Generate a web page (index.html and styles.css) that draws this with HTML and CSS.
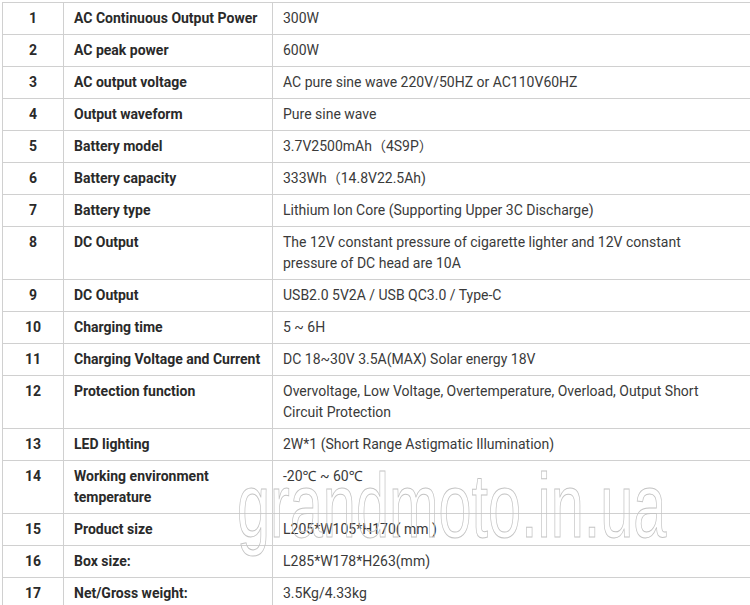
FILE: index.html
```html
<!DOCTYPE html>
<html lang="en">
<head>
  <meta charset="UTF-8" />
  <title>Specifications</title>
  <meta name="viewport" content="width=device-width, initial-scale=1.0" />
  <link rel="stylesheet" href="styles.css">
</head>
<body>
  <div class="spec-wrap">
    <table class="spec-table">
      <colgroup>
        <col class="col-num" />
        <col class="col-name" />
        <col />
      </colgroup>
      <tbody>
        <tr><td class="num">1</td><td class="name">AC Continuous Output Power</td><td>300W</td></tr>
        <tr><td class="num">2</td><td class="name">AC peak power</td><td>600W</td></tr>
        <tr><td class="num">3</td><td class="name">AC output voltage</td><td>AC pure sine wave 220V/50HZ or AC110V60HZ</td></tr>
        <tr><td class="num">4</td><td class="name">Output waveform</td><td>Pure sine wave</td></tr>
        <tr><td class="num">5</td><td class="name">Battery model</td><td>3.7V2500mAh（4S9P）</td></tr>
        <tr><td class="num">6</td><td class="name">Battery capacity</td><td>333Wh（14.8V22.5Ah)</td></tr>
        <tr><td class="num">7</td><td class="name">Battery type</td><td>Lithium Ion Core (Supporting Upper 3C Discharge)</td></tr>
        <tr><td class="num">8</td><td class="name">DC Output</td><td>The 12V constant pressure of cigarette lighter and 12V constant pressure of DC head are 10A</td></tr>
        <tr><td class="num">9</td><td class="name">DC Output</td><td>USB2.0 5V2A / USB QC3.0 / Type-C</td></tr>
        <tr><td class="num">10</td><td class="name">Charging time</td><td>5 ~ 6H</td></tr>
        <tr><td class="num">11</td><td class="name">Charging Voltage and Current</td><td>DC 18~30V 3.5A(MAX) Solar energy 18V</td></tr>
        <tr><td class="num">12</td><td class="name">Protection function</td><td>Overvoltage, Low Voltage, Overtemperature, Overload, Output Short Circuit Protection</td></tr>
        <tr><td class="num">13</td><td class="name">LED lighting</td><td>2W*1 (Short Range Astigmatic Illumination)</td></tr>
        <tr><td class="num">14</td><td class="name">Working environment temperature</td><td>-20℃ ~ 60℃</td></tr>
        <tr><td class="num">15</td><td class="name">Product size</td><td>L205*W105*H170( mm )</td></tr>
        <tr><td class="num">16</td><td class="name">Box size:</td><td>L285*W178*H263(mm)</td></tr>
        <tr><td class="num">17</td><td class="name">Net/Gross weight:</td><td>3.5Kg/4.33kg</td></tr>
      </tbody>
    </table>
    <div class="watermark">grandmoto.in.ua</div>
  </div>
</body>
</html>
```

FILE: styles.css
```css
body {
  margin: 0;
  background: #ffffff;
  font-family: Roboto, "Noto Sans", "Noto Sans CJK SC", sans-serif;
  color: #333333;
  overflow: hidden;
}

.spec-wrap {
  position: relative;
  padding: 2px 0 0 2px;
}

.spec-table {
  width: 750px;
  border-collapse: collapse;
  table-layout: fixed;
  font-size: 14px;
  line-height: 21px;
}

.col-num {
  width: 61px;
}

.col-name {
  width: 209px;
}

.spec-table td {
  border: 1px solid #d0d0d0;
  padding: 5px 16px 5px 10px;
  vertical-align: top;
  color: #3a3a3a;
}

.spec-table td.num {
  padding-right: 10px;
  text-align: center;
  font-weight: 700;
  color: #2a2a2a;
}

.spec-table td.name {
  padding-right: 10px;
  font-weight: 700;
  color: #2a2a2a;
}

.watermark {
  position: absolute;
  left: 237px;
  top: 456px;
  font-family: "Liberation Sans", Arial, sans-serif;
  font-size: 90px;
  line-height: 100px;
  color: transparent;
  -webkit-text-stroke: 1px #c4c4c4;
  transform: scaleX(0.66);
  transform-origin: left top;
  white-space: nowrap;
  pointer-events: none;
}
```
